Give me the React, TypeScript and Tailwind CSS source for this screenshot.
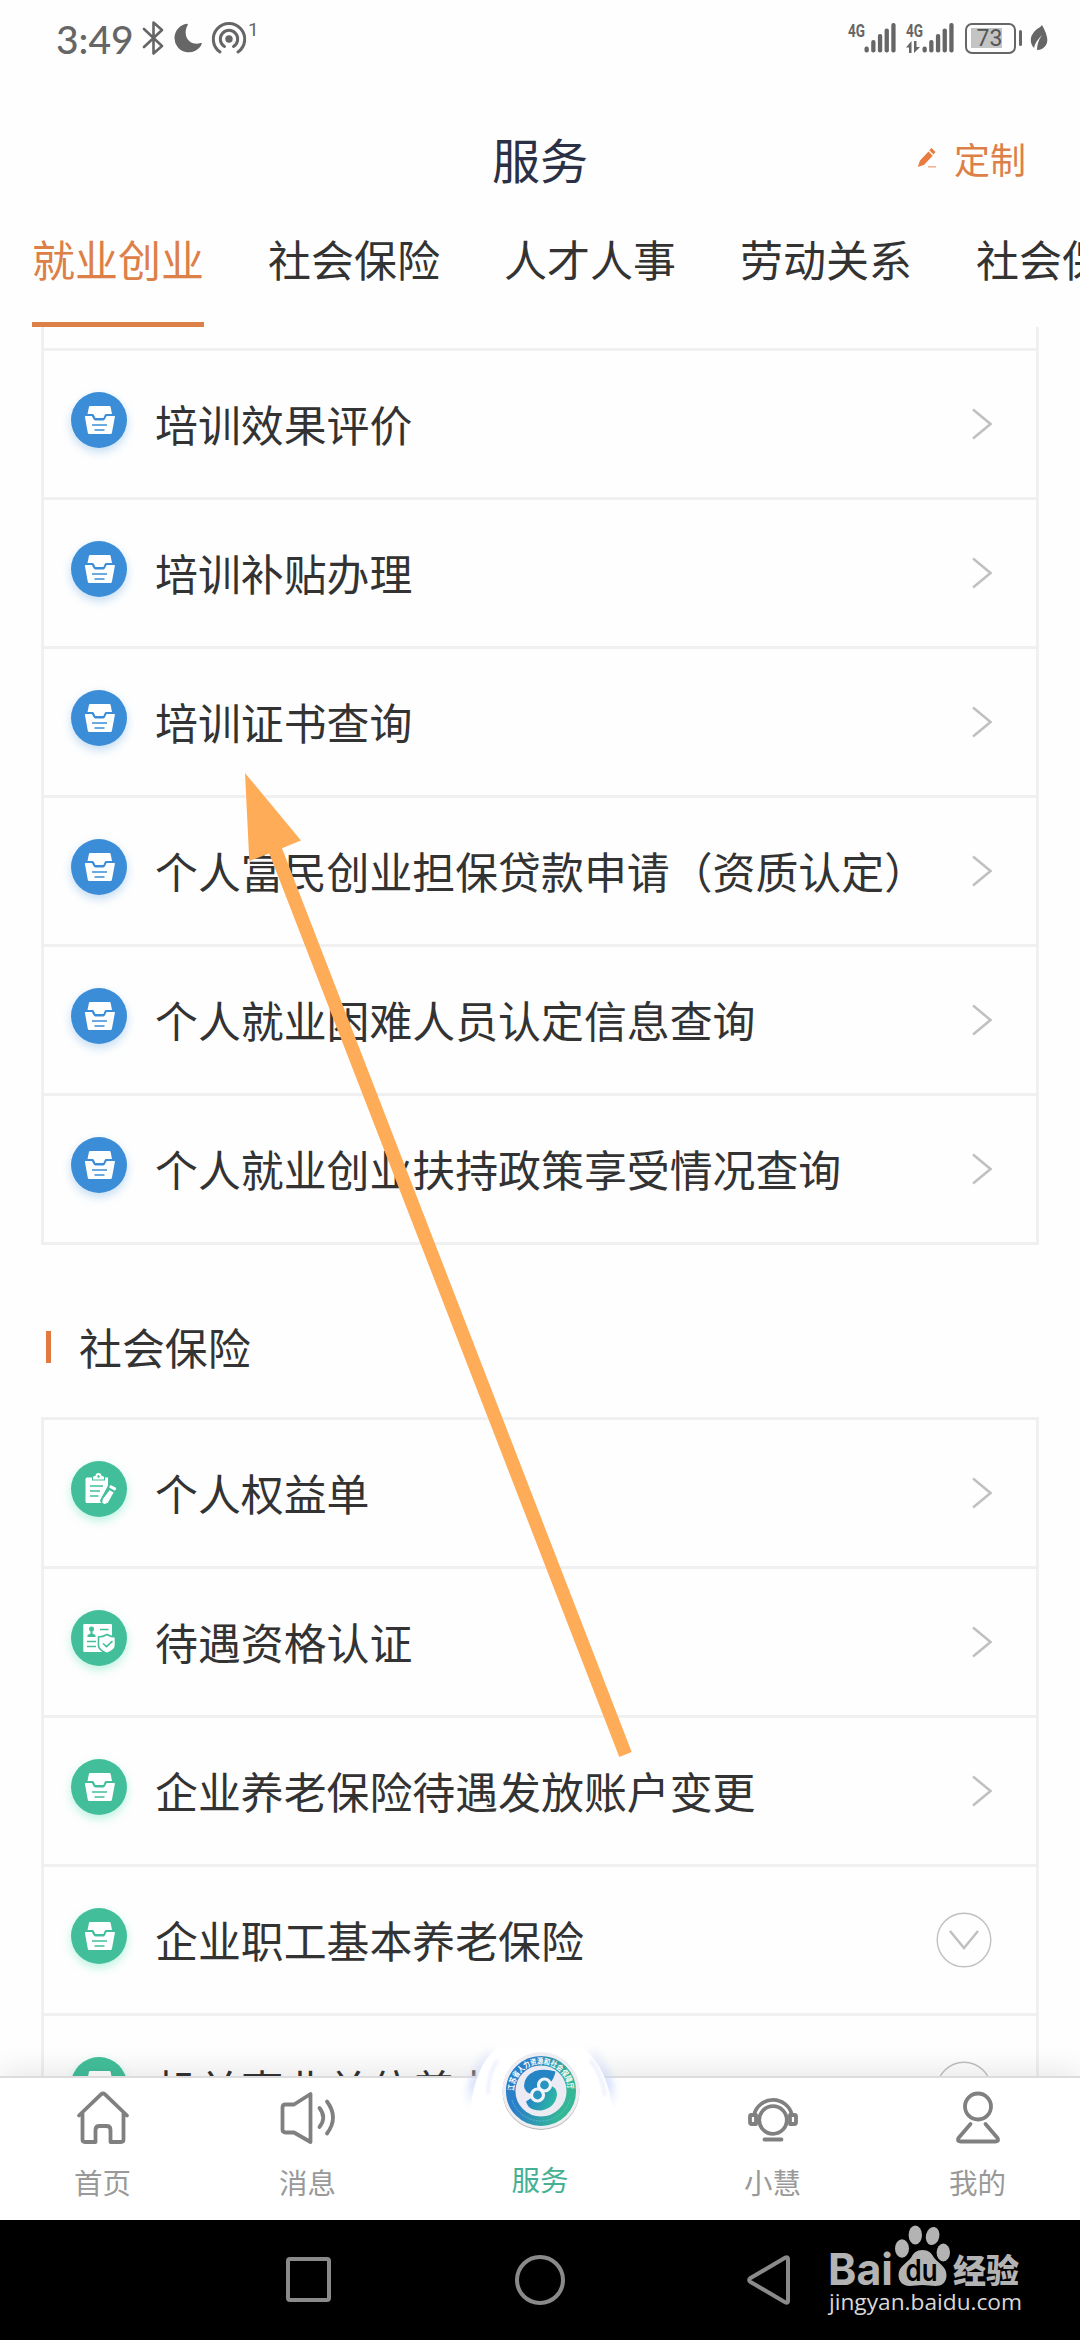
import React from "react";

type RowIcon = "inbox" | "clipboard" | "idcard";

type Service = {
  id: number;
  name: string;
  icon: RowIcon;
  expandable?: boolean;
};

const tabs = ["就业创业", "社会保险", "人才人事", "劳动关系", "社会保障卡"];

const jobServices: Service[] = [
  { id: 1, name: "培训效果评价", icon: "inbox" },
  { id: 2, name: "培训补贴办理", icon: "inbox" },
  { id: 3, name: "培训证书查询", icon: "inbox" },
  { id: 4, name: "个人富民创业担保贷款申请（资质认定）", icon: "inbox" },
  { id: 5, name: "个人就业困难人员认定信息查询", icon: "inbox" },
  { id: 6, name: "个人就业创业扶持政策享受情况查询", icon: "inbox" },
];

const insuranceServices: Service[] = [
  { id: 1, name: "个人权益单", icon: "clipboard" },
  { id: 2, name: "待遇资格认证", icon: "idcard" },
  { id: 3, name: "企业养老保险待遇发放账户变更", icon: "inbox" },
  { id: 4, name: "企业职工基本养老保险", icon: "inbox", expandable: true },
  { id: 5, name: "机关事业单位养老保险", icon: "inbox", expandable: true },
];

function ServiceIcon({ icon, color }: { icon: RowIcon; color: string }) {
  return (
    <svg viewBox="0 0 56 56" className="h-14 w-14">
      {icon === "inbox" && (
        <g fill="#fff">
          <path d="M19 14h19.5q.8 0 1.1.8L41 22H35q-.8 0-1.2.8L32.4 26h-8l-1.600-3.200q-.4-.8-1.300-.8H16.500l1.500-7.200q.2-.8 1-.8Z" />
          <path d="M14.600 24h6.200l2 3.600q.4.800 1.400.8h8.200q1 0 1.400-.8l1.800-3.600h7.800q.6 0 .5.800l-3 16q-.2 1.200-1.400 1.200H18.200q-1.200 0-1.400-1.200l-2.900-16q-.1-.8.7-.8Z" />
          <path d="M21 33h15M23.500 38h10" stroke={color} strokeWidth="1.300" fill="none" />
        </g>
      )}
      {icon === "clipboard" && (
        <g>
          <path
            d="M16 16.500h5v3h13v-3h3v8l-8 15 1 2.500H16q-1.500 0-1.500-1.500V18q0-1.500 1.500-1.500Z"
            fill="#fff"
          />
          <path d="M22 18.500v-2q0-1.500 1.500-1.500h1a3 3 0 0 1 6 0h1q1.500 0 1.500 1.500v2Z" fill="#fff" />
          <circle cx="27.500" cy="15.500" r="1.200" fill={color} />
          <path d="M19 25h13M19 30h10M19 35h8.500" stroke={color} strokeWidth="1.500" />
          <path
            d="m38.500 28.500 5 2.600-6.300 11.200-4 1.400-2.600-1.700.6-4Z"
            fill="#fff"
            stroke={color}
            strokeWidth="1.200"
          />
          <path d="m39.500 24 5 2.600q1 .6.500 1.500l-1 1.600-6-3.200Z" fill="#fff" />
        </g>
      )}
      {icon === "idcard" && (
        <g>
          <path d="M13.300 14H40q1 0 1 1v26q0 1-1 1H13.300q-1 0-1-1V15q0-1 1-1Z" fill="#fff" />
          <circle cx="20.500" cy="19" r="2.500" fill={color} />
          <path d="M19.500 20h2v3.500l3 1.500v2h-8v-2l3-1.500Z" fill={color} />
          <path d="M29 19.500h8.500M16 31.500h9M16 36.500h9" stroke={color} strokeWidth="1.500" />
          <path
            d="M36 24.500q4 2.500 8.500 2.500v8.500q0 4.500-8.500 8-8.500-3.500-8.500-8V27q4.500 0 8.500-2.500Z"
            fill="#fff"
            stroke={color}
            strokeWidth="1.600"
          />
          <path d="m32 33.500 3.500 3.200 6-5.500" stroke={color} strokeWidth="1.600" fill="none" />
        </g>
      )}
    </svg>
  );
}

function ServiceRow({ service, tone }: { service: Service; tone: "blue" | "green" }) {
  return (
    <div className="flex h-[149px] shrink-0 items-center border-b-[3px] border-[#f0f0f0] pl-[27px] pr-[44px]">
      <div
        className={
          tone === "blue"
            ? "mb-2 rounded-full bg-[#3b8dd8] shadow-[0_4px_10px_rgba(59,141,216,0.3)]"
            : "mb-2 rounded-full bg-[#42bf9a] shadow-[0_4px_10px_rgba(66,220,170,0.35)]"
        }
      >
        <ServiceIcon icon={service.icon} color={tone === "blue" ? "#3b8dd8" : "#42bf9a"} />
      </div>
      <p className="mb-[2px] ml-7 flex-1 whitespace-nowrap text-[42.900px] leading-[60px]">{service.name}</p>
      {service.expandable ? (
        <svg viewBox="0 0 56 56" className="h-14 w-14 shrink-0" fill="none" stroke="#c0c0c0">
          <circle cx="28" cy="28" r="26.800" strokeWidth="1.400" />
          <path d="m14 19 14 17 14-17" strokeWidth="2.500" />
        </svg>
      ) : (
        <svg viewBox="0 0 20 32" className="h-8 w-5 shrink-0" fill="none" stroke="#c0c0c0">
          <path d="m1 1.500 17.500 14.500L1 30.500" strokeWidth="2.500" />
        </svg>
      )}
    </div>
  );
}

function Signal({ data }: { data?: boolean }) {
  return (
    <svg viewBox="0 0 50 32" className="h-8 w-[50px] overflow-visible" fill="#666">
      <text
        x="0"
        y="14.500"
        fontSize="18"
        fontWeight="700"
        textLength="17"
        lengthAdjust="spacingAndGlyphs"
        fontFamily="Roboto"
      >
        4G
      </text>
      {data && <path d="M0 25.500 5.500 19v12H3v-5.500ZM8 19v12l6-6h-3.500V19Z" />}
      <rect x="16.500" y="24.500" width="4.300" height="6" rx="2" />
      <rect x="23.200" y="18" width="4.300" height="12.500" rx="2" />
      <rect x="29.900" y="12" width="4.300" height="18.500" rx="2" />
      <rect x="36.600" y="6.500" width="4.300" height="24" rx="2" />
      <rect x="43.300" y="1" width="4.300" height="29.500" rx="2" />
    </svg>
  );
}

function StatusBar() {
  return (
    <div className="flex h-[76px] shrink-0 items-center pl-[56px] pr-[32px] text-[#666]">
      <span className="mt-[3px] w-[86px] font-[Lato] text-[39px] font-medium leading-none">3:49</span>
      <svg viewBox="0 0 22 34" className="h-[34px] w-[22px]" fill="none" stroke="#666" strokeWidth="2.600">
        <path d="m2 8 18 17-8.500 7.500V1.500L20 9 2 26" strokeLinejoin="round" strokeLinecap="round" />
      </svg>
      <svg viewBox="0 0 30 30" className="ml-[9px] h-[30px] w-[30px]" fill="#666">
        <path d="M14 .8A14.300 14.300 0 1 0 29 20.500q-.5-.8-1.300-.4C17 23.500 8.500 13 14.800 1.800Q15 .8 14 .8Z" />
      </svg>
      <svg viewBox="0 0 36 34" className="ml-[8px] h-[34px] w-9" fill="none" stroke="#666" strokeWidth="3">
        <path d="M9 31a15.700 15.700 0 1 1 18 0" strokeLinecap="round" />
        <path d="M13.500 25.500a8.700 8.700 0 1 1 9 0" strokeLinecap="round" />
        <circle cx="18" cy="18" r="2.200" fill="#666" />
      </svg>
      <span className="mb-[18px] ml-px font-[Roboto] text-[19px] leading-none">1</span>
      <div className="ml-auto flex items-center">
        <Signal />
        <div className="ml-2">
          <Signal data />
        </div>
        <div className="ml-[9px] flex h-[31px] w-[51px] rounded-[7px] border-[2.500px] border-[#666] p-[3.500px]">
          <div className="h-full w-[31px] bg-[#c4c4c4]">
            <p className="pl-[6px] font-[Roboto] text-[23px] leading-[21px] text-[#555]">73</p>
          </div>
        </div>
        <div className="ml-[3px] h-4 w-[3px] rounded bg-[#666]" />
        <svg viewBox="0 0 18 28" className="ml-2 h-7 w-[18px]" fill="#666">
          <path d="M12 1q8 14 4 20-3 5-9 5 0-8 5-15-7 7-8 13-4-4-3-10 1-5 6-9 4-2 5-4Z" />
        </svg>
      </div>
    </div>
  );
}

function Emblem() {
  return (
    <svg viewBox="0 0 180 100" className="absolute -left-[24px] -top-[38px] h-[100px] w-[180px]">
      <defs>
        <linearGradient id="ring" x1="0" y1="0" x2="1" y2="0.300">
          <stop offset="0.300" stopColor="#2b7fc8" />
          <stop offset="1" stopColor="#35b795" />
        </linearGradient>
        <linearGradient id="swirl" x1="0" y1="0" x2="1" y2="0.300">
          <stop offset="0.200" stopColor="#2484c4" />
          <stop offset="1" stopColor="#2cb5a4" />
        </linearGradient>
        <linearGradient id="wing" x1="0" y1="0" x2="0" y2="1">
          <stop offset="0" stopColor="#d5def8" stopOpacity="0.400" />
          <stop offset="0.600" stopColor="#c6d5fb" />
          <stop offset="1" stopColor="#dde6fd" stopOpacity="0" />
        </linearGradient>
        <filter id="soft" x="-50%" y="-50%" width="200%" height="200%">
          <feGaussianBlur stdDeviation="4" />
        </filter>
        <filter id="haze" x="-50%" y="-50%" width="200%" height="200%">
          <feGaussianBlur stdDeviation="1.500" />
        </filter>
        <path id="arc" d="M64 51a27 27 0 1 1 54 0" />
      </defs>
      <path
        d="M42 12Q24 28 20 68M140 12q18 16 22 56"
        stroke="url(#wing)"
        strokeWidth="8"
        fill="none"
        filter="url(#soft)"
      />
      <path d="M47 8Q24 26 20 74h143Q158 26 132 8Z" fill="#fff" />
      <path
        d="M48 20Q38 32 38 54M140 20q12 14 15 36"
        stroke="#dfe3fb"
        strokeWidth="3"
        fill="none"
        opacity=".6"
        filter="url(#haze)"
      />
      <circle cx="91" cy="51.500" r="38.500" fill="#b9b4b8" />
      <circle cx="91" cy="50.500" r="38.500" fill="#ededf2" />
      <circle cx="91" cy="51" r="30.300" fill="#eceaf3" stroke="url(#ring)" strokeWidth="9.500" />
      <text fill="#fff" fontSize="8" fontWeight="700" fontFamily="Noto Sans CJK SC">
        <textPath href="#arc" textLength="83" lengthAdjust="spacingAndGlyphs">
          江苏省人力资源和社会保障厅
        </textPath>
      </text>
      <path
        d="M62 60a30.500 30.500 0 0 0 58 0"
        stroke="#62c4dc"
        strokeWidth="1"
        fill="none"
        strokeDasharray="2 1"
        opacity=".7"
      />
      <path
        d="M105.500 31.500Q95 28.500 85 31q-11 5-11 15 1 7 8 8l18-11q4-4 5.500-11.500Z"
        fill="#2484c4"
      />
      <path d="M76 61.500 99 46q8 0 8 9-2 13-16 15.500-9 0-12.500-4-1.500-2-2.500-5Z" fill="url(#swirl)" />
      <circle cx="94.500" cy="45" r="6" fill="#2795c0" stroke="#f3f4fa" strokeWidth="3.200" />
      <circle cx="87.500" cy="55" r="6" fill="#2795c0" stroke="#f3f4fa" strokeWidth="3.200" />
    </svg>
  );
}

const bottomItems = [
  {
    name: "首页",
    icon: (
      <path d="M5.500 22.500v26q0 2.500 2.500 2.500h10.500V39q0-4 4-4h7q4 0 4 4v12H44q2.500 0 2.500-2.500v-26M2 24.500 24 3.300q2-1.800 4 0l22 21.200" />
    ),
  },
  {
    name: "消息",
    icon: (
      <path d="M28.500 3v48L12 41.500H3.500Q.5 41.500.5 38.500v-22q0-3 3-3H12ZM37.500 17q7.500 9.500 0 19M45 10.500q12 16 0 32" />
    ),
  },
  { name: "服务", icon: null },
  {
    name: "小慧",
    icon: (
      <>
        <circle cx="26" cy="29" r="13.800" />
        <path d="M7 24a19.500 19.500 0 0 1 38 0" />
        <path d="M4.500 24H9v9H4.500q-1.500 0-1.500-1.500v-6q0-1.500 1.500-1.500ZM43 24h4.500q1.500 0 1.500 1.500v6q0 1.500-1.500 1.500H43ZM17.500 48.500h17" />
      </>
    ),
  },
  {
    name: "我的",
    icon: (
      <>
        <circle cx="26" cy="15.500" r="13" />
        <path d="M18.500 33 6.500 47q-2 3.500 2 3.500h35q4 0 2-3.500L33.500 33" />
      </>
    ),
  },
];

function BottomBar() {
  return (
    <div className="relative grid h-36 shrink-0 grid-cols-[205px_205px_260px_205px_205px] border-t-2 border-[#dcdcdc] bg-white shadow-[0_-8px_24px_rgba(0,0,0,0.08)]">
      {bottomItems.map((item) =>
        item.icon ? (
          <div key={item.name} className="flex flex-col items-center pt-[13px] text-[#999]">
            <svg
              viewBox="0 0 52 54"
              className="h-[54px] w-[52px] overflow-visible"
              fill="none"
              stroke="#808080"
              strokeWidth="3.800"
              strokeLinecap="round"
              strokeLinejoin="round"
            >
              {item.icon}
            </svg>
            <p className="mt-[17px] text-[28.500px] leading-10">{item.name}</p>
          </div>
        ) : (
          <div key={item.name} className="flex justify-center pt-[81px] text-[#45b094]">
            <div className="absolute left-[474px] top-0">
              <Emblem />
            </div>
            <p className="text-[28.500px] leading-10">{item.name}</p>
          </div>
        )
      )}
    </div>
  );
}

function Watermark() {
  return (
    <div className="absolute left-[829px] top-[4px] text-[#b3b3b3]">
      <div className="flex h-[64px] items-end">
        <svg viewBox="0 0 64 64" className="h-16 w-16" fill="#b3b3b3">
          <text
            x="-1"
            y="61"
            fontSize="44"
            fontWeight="700"
            fontFamily="Inter"
            textLength="65"
            lengthAdjust="spacingAndGlyphs"
          >
            Bai
          </text>
        </svg>
        <svg viewBox="0 0 60 64" className="h-16 w-[60px]">
          <g fill="#b3b3b3">
            <ellipse cx="9" cy="24.500" rx="7" ry="9.200" />
            <ellipse cx="22.300" cy="11" rx="6.700" ry="9.500" />
            <ellipse cx="39.600" cy="12" rx="6.700" ry="9.200" transform="rotate(12 39.600 12)" />
            <ellipse cx="50.300" cy="28.500" rx="6.700" ry="9" />
            <path d="M29.500 26c6 0 9 3 11 7 3 5 13 9 13 18 0 8-5 11-11 11-5 0-8-1-13-1s-8 1-13 1c-6 0-11-4-11-11 0-9 9-12 13-18 2-4 5-7 11-7Z" />
          </g>
          <text
            x="12.500"
            y="56.500"
            fontSize="30"
            fontWeight="600"
            fontFamily="Inter"
            textLength="32"
            lengthAdjust="spacingAndGlyphs"
          >
            du
          </text>
        </svg>
        <p className="mb-px text-[33px] font-black leading-[36px]">经验</p>
      </div>
      <p className="font-['Open_Sans'] text-[22.700px] leading-7 text-[#d8d8d8]">jingyan.baidu.com</p>
    </div>
  );
}

function SystemNav() {
  return (
    <div className="relative flex h-[120px] shrink-0 bg-black pl-[286px] pt-[35px]">
      <div className="mt-[2px] h-[45px] w-[45px] rounded-[4px] border-[4px] border-[#8a8a8a]" />
      <div className="ml-[184px] h-[50px] w-[50px] rounded-full border-[4px] border-[#8a8a8a]" />
      <svg viewBox="0 0 44 50" className="ml-[182px] h-[50px] w-11" fill="none" stroke="#8a8a8a" strokeWidth="4">
        <path d="M38.500 2.600 3.600 23q-3 2 0 4l34.900 20.400q2.500 1 2.500-1.500V4q0-2.500-2.500-1.400Z" />
      </svg>
      <Watermark />
    </div>
  );
}

export default function App() {
  return (
    <div className="relative flex h-[2340px] w-[1080px] flex-col overflow-hidden bg-[#fefefe] font-['Noto_Sans_CJK_SC',sans-serif] text-[#333]">
      <StatusBar />
      <header className="grid h-[138px] shrink-0 grid-cols-3 items-center pt-[26px]">
        <h1 className="col-start-2 text-center text-[48px] leading-none text-[#2b3045]">服务</h1>
        <div className="flex items-center justify-end pr-[54px] text-[#dd8048]">
          <svg viewBox="0 0 20 22" className="mr-[17px] h-[22px] w-5" fill="#e87c40">
            <path d="m14.500 1 4 4-2 2.500-4.200-4.200ZM11.500 4.500l4.200 4.200-8.500 9L.8 20l2.200-6.500Z" />
            <path d="M11 19.200h8v1.300h-8Z" opacity=".7" />
          </svg>
          <p className="text-4xl leading-none">定制</p>
        </div>
      </header>
      <nav className="flex h-[113px] shrink-0 gap-[64px] whitespace-nowrap pl-8 text-[43px] leading-none">
        {tabs.map((tab, index) => (
          <div
            key={tab}
            className={
              index === 0
                ? "flex shrink-0 items-center border-b-[5px] border-[#dd8048] pb-[19px] text-[#dd8048]"
                : "flex shrink-0 items-center border-b-[5px] border-transparent pb-[19px]"
            }
          >
            {tab}
          </div>
        ))}
      </nav>
      <main className="flex min-h-0 flex-1 flex-col overflow-hidden px-[41px]">
        <section className="border-x-[3px] border-[#f0f0f0]">
          <div className="h-6 border-b-[3px] border-[#f0f0f0]" />
          {jobServices.map((service) => (
            <ServiceRow key={service.id} service={service} tone="blue" />
          ))}
        </section>
        <div className="flex h-[172px] shrink-0 items-center pl-[5px] pt-8">
          <div className="h-8 w-[5px] bg-[#e27a40]" />
          <h2 className="mb-[2px] ml-7 text-[42.900px] leading-none">社会保险</h2>
        </div>
        <section className="border-x-[3px] border-t-[3px] border-[#f0f0f0]">
          {insuranceServices.map((service) => (
            <ServiceRow key={service.id} service={service} tone="green" />
          ))}
        </section>
      </main>
      <BottomBar />
      <SystemNav />
      {/* pointer to the certificate query row */}
      <svg viewBox="0 0 390 986" className="absolute left-[244px] top-[772px] h-[986px] w-[390px]" fill="#ffac59">
        <path d="M1 1 57 68.500l-19 7.700L387.700 980l-12.400 5L25.300 81.500l-20 7.500Z" />
      </svg>
    </div>
  );
}
